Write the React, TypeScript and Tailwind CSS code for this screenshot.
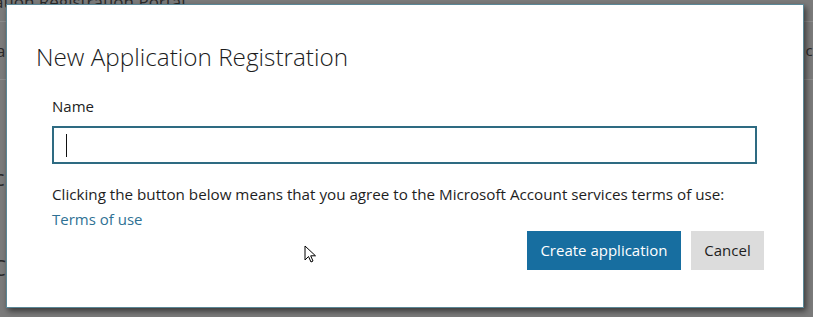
import React from "react";

const font = "font-['Segoe_UI','Open_Sans','Liberation_Sans',sans-serif]";

// page behind the modal, dimmed
const Backdrop = () => {
  return (
    <div className="absolute inset-0 bg-[#7b7b7b] text-[#2a2a2a] overflow-hidden flex flex-col">
      <div className="h-[22px] shrink-0 border-b border-[#8c8c8c] flex items-end">
        <span className="ml-[-6px] text-[17px] leading-[22px] translate-y-[-8px]">
          ation Registration Portal
        </span>
      </div>
      <div className="h-[58px] shrink-0 border-b border-[#8c8c8c] flex justify-between items-center">
        <span className="ml-[-4px] text-[17px]">al</span>
        <span className="mr-[-8px] text-[15px]">ca</span>
      </div>
      <div className="flex flex-col ml-[-6px] text-[22px] leading-[30px]">
        <span className="mt-[82px]">c</span>
        <span className="mt-[60px] ml-[-2px]">C</span>
      </div>
    </div>
  );
};

const Cursor = () => {
  return (
    <svg
      width="14"
      height="20"
      viewBox="0 0 14 20"
      className="absolute left-[297px] top-[240px]"
    >
      <path
        d="M1 1 L1 15 L4.5 11.5 L7 17 L9 16 L6.7 10.8 L11.5 10.8 Z"
        fill="#fff"
        stroke="#000"
        strokeWidth="1"
      />
    </svg>
  );
};

export default function App() {
  return (
    <div className={`relative w-[813px] h-[317px] overflow-hidden ${font}`}>
      <Backdrop />
      <div className="absolute left-[6px] top-[4px] w-[798px] h-[304px] bg-white border border-[#5a8797] shadow-[2px_3px_6px_rgba(0,0,0,0.55)]">
        <div className="pl-[29px] pr-[39px] pt-[36px]">
          <h1 className="text-[24.3px] font-light text-[#1b1b1b] leading-[32px]">
            New Application Registration
          </h1>
          <div className="pl-[16px] pt-[23px]">
            <label className="block text-[15px] font-medium text-[#222] leading-[20px]">
              Name
            </label>
            <div className="mt-[10px] w-[705px] h-[38px] border-2 border-[#2e6b82] flex items-center pl-[12px]">
              <div className="w-px h-[23px] bg-[#111]" />
            </div>
            <p className="mt-[19px] text-[15.2px] text-[#1e1e1e] leading-[22px]">
              Clicking the button below means that you agree to the Microsoft Account services terms of use:
            </p>
            <a className="block mt-[3px] text-[15px] text-[#2f7194] leading-[22px]">
              Terms of use
            </a>
          </div>
          <div className="flex justify-end gap-[10px] mt-[1px]">
            <button className="h-[39px] w-[154px] bg-[#176ea0] text-white text-[15px]">
              Create application
            </button>
            <button className="h-[39px] w-[73px] bg-[#dcdcdc] text-[#1e1e1e] text-[15px]">
              Cancel
            </button>
          </div>
        </div>
        <Cursor />
      </div>
    </div>
  );
}
